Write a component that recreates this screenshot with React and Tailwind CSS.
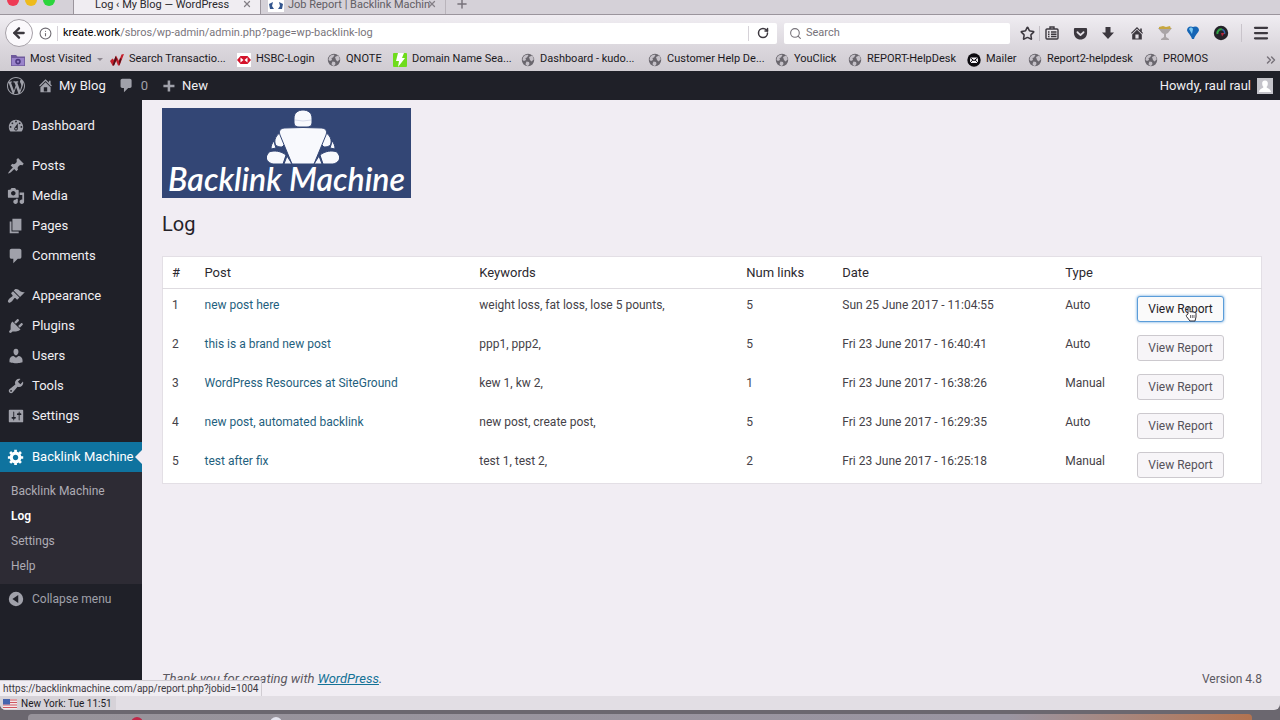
import {
  ArrowLeft,
  ChevronsRight,
  Info,
  Menu,
  Plus,
  RotateCw,
  Search,
  Star,
  X,
} from "lucide-react";
import { FaGetPocket } from "react-icons/fa";

const ICONS = {
  wordpress:
    "M20 10c0-5.51-4.49-10-10-10C4.48 0 0 4.49 0 10c0 5.52 4.48 10 10 10 5.51 0 10-4.48 10-10zM7.78 15.37L4.37 6.22c.55-.02 1.17-.08 1.17-.08.5-.06.44-1.13-.06-1.11 0 0-1.45.11-2.37.11-.18 0-.37 0-.58-.01C4.12 2.69 6.87 1.11 10 1.11c2.33 0 4.45.87 6.05 2.34-.68-.11-1.65.39-1.65 1.58 0 .74.45 1.36.9 2.1.35.61.55 1.36.55 2.46 0 1.49-1.4 5-1.4 5l-3.03-8.37c.54-.02.82-.17.82-.17.5-.05.44-1.25-.06-1.22 0 0-1.44.12-2.38.12-.87 0-2.33-.12-2.33-.12-.5-.03-.56 1.2-.06 1.22l.92.08 1.26 3.41zM17.41 10c.24-.64.74-1.87.43-4.25.7 1.29 1.05 2.71 1.05 4.25 0 3.29-1.73 6.24-4.4 7.78.97-2.59 1.94-5.2 2.92-7.78zM6.1 18.09C3.12 16.65 1.11 13.53 1.11 10c0-1.3.23-2.48.72-3.59C3.25 10.3 4.67 14.2 6.1 18.09zm4.03-6.63l2.58 6.98c-.86.29-1.76.45-2.71.45-.79 0-1.57-.11-2.29-.33.81-2.38 1.62-4.74 2.42-7.1z",
  home: "M16 8.5l1.53 1.53-1.06 1.06L10 4.6l-6.47 6.49-1.06-1.06L10 2.5l4 4v-2h2v4zm-6-2.46l6 5.99V18H4v-5.97zM12 17v-5H8v5h4z",
  plus: "M17 9v3h-5v5H9v-5H4V9h5V4h3v5h5z",
  dashboard:
    "M3.76 16h12.48c1.1-1.37 1.76-3.11 1.76-5 0-4.42-3.58-8-8-8s-8 3.58-8 8c0 1.89.66 3.63 1.76 5zM10 4c.55 0 1 .45 1 1s-.45 1-1 1-1-.45-1-1 .45-1 1-1zM6 6c.55 0 1 .45 1 1s-.45 1-1 1-1-.45-1-1 .45-1 1-1zm8 0c.55 0 1 .45 1 1s-.45 1-1 1-1-.45-1-1 .45-1 1-1zm-5.37 5.55L12 7v6c0 1.1-.9 2-2 2s-2-.9-2-2c0-.57.24-1.08.63-1.45zM4 10c.55 0 1 .45 1 1s-.45 1-1 1-1-.45-1-1 .45-1 1-1zm12 0c.55 0 1 .45 1 1s-.45 1-1 1-1-.45-1-1 .45-1 1-1zm-5 3c0-.55-.45-1-1-1s-1 .45-1 1 .45 1 1 1 1-.45 1-1z",
  post: "M10.44 3.02l1.82-1.82 6.36 6.35-1.83 1.82c-1.05-.68-2.48-.57-3.41.36l-.75.75c-.92.93-1.04 2.35-.35 3.41l-1.83 1.82-2.41-2.41-2.8 2.79c-.42.42-3.38 2.71-3.8 2.29s1.86-3.39 2.28-3.81l2.79-2.79L4.1 9.36l1.83-1.82c1.05.69 2.48.57 3.4-.36l.75-.75c.93-.92 1.05-2.35.36-3.41z",
  media:
    "M13 11V4c0-.55-.45-1-1-1h-1.67L9 1H5L3.67 3H2c-.55 0-1 .45-1 1v7c0 .55.45 1 1 1h10c.55 0 1-.45 1-1zM7 4.5c1.38 0 2.5 1.12 2.5 2.5S8.38 9.5 7 9.5 4.5 8.38 4.5 7 5.62 4.5 7 4.5zM14 6h5v10.5c0 1.38-1.12 2.5-2.5 2.5S14 17.88 14 16.5s1.12-2.5 2.5-2.5c.17 0 .34.02.5.05V9h-3V6zm-4 8.05V13h2v3.5c0 1.38-1.12 2.5-2.5 2.5S7 17.88 7 16.5 8.12 14 9.5 14c.17 0 .34.02.5.05z",
  page: "M6 15V2h10v13H6zm-1 1h8v2H3V5h2v11z",
  comments:
    "M5 2h9c1.1 0 2 .9 2 2v7c0 1.1-.9 2-2 2h-2l-5 5v-5H5c-1.1 0-2-.9-2-2V4c0-1.1.9-2 2-2z",
  appearance:
    "M14.48 11.06L7.41 3.99l1.5-1.5c.5-.56 2.3-.47 3.51.32 1.21.8 1.43 1.28 2.91 2.1 1.18.64 2.45 1.26 4.45.85zm-.71.71L6.7 4.7 4.93 6.47c-.39.39-.39 1.02 0 1.41l1.06 1.06c.39.39.39 1.03 0 1.42-.6.6-1.43 1.11-2.21 1.69-.35.26-.7.53-1.01.84C1.43 14.23.4 16.08 1.4 17.07c.99 1 2.84-.03 4.18-1.36.31-.31.58-.66.85-1.02.57-.78 1.08-1.61 1.69-2.21.39-.39 1.02-.39 1.41 0l1.06 1.06c.39.39 1.02.39 1.41 0z",
  plugins:
    "M13.11 4.36L9.87 7.6 8 5.73l3.24-3.24c.35-.34 1.05-.2 1.56.32.52.51.66 1.21.31 1.55zm-8 1.77l.91-1.12 9.01 9.01-1.19.84c-.71.71-2.63 1.16-3.82 1.16H6.14L4.9 17.26c-.59.59-1.54.59-2.12 0-.59-.58-.59-1.53 0-2.12l1.24-1.24v-3.88c0-1.13.4-3.19 1.09-3.89zm7.26 3.97l3.24-3.24c.34-.35 1.04-.21 1.55.31.52.51.66 1.21.31 1.55l-3.24 3.25z",
  users:
    "M10 9.25c-2.27 0-2.73-3.44-2.73-3.44C7 4.02 7.82 2 9.97 2c2.16 0 2.98 2.02 2.71 3.81 0 0-.41 3.44-2.68 3.44zm0 2.57L12.72 10c2.39 0 4.52 2.33 4.52 4.53v2.49s-3.65 1.13-7.24 1.13c-3.65 0-7.24-1.13-7.24-1.13v-2.49c0-2.25 1.94-4.48 4.47-4.48z",
  tools:
    "M16.68 9.77c-1.34 1.34-3.3 1.67-4.95.99l-5.41 6.52c-.99.99-2.59.99-3.58 0s-.99-2.59 0-3.57l6.52-5.42c-.68-1.65-.35-3.61.99-4.95 1.28-1.28 3.12-1.62 4.72-1.06l-2.89 2.89 2.82 2.82 2.86-2.87c.53 1.58.18 3.39-1.08 4.65zM3.81 16.21c.4.39 1.04.39 1.43 0 .4-.4.4-1.04 0-1.43-.39-.4-1.03-.4-1.43 0-.39.39-.39 1.03 0 1.43z",
  settings:
    "M18 16V4c0-.55-.45-1-1-1H3c-.55 0-1 .45-1 1v12c0 .55.45 1 1 1h14c.55 0 1-.45 1-1zM8 11h1c.55 0 1 .45 1 1s-.45 1-1 1H8v1.5c0 .28-.22.5-.5.5s-.5-.22-.5-.5V13H6c-.55 0-1-.45-1-1s.45-1 1-1h1V5.5c0-.28.22-.5.5-.5s.5.22.5.5V11zm5-2h-1c-.55 0-1-.45-1-1s.45-1 1-1h1V5.5c0-.28.22-.5.5-.5s.5.22.5.5V7h1c.55 0 1 .45 1 1s-.45 1-1 1h-1v5.5c0 .28-.22.5-.5.5s-.5-.22-.5-.5V9z",
  generic:
    "M18 12h-2.18c-.17.7-.44 1.35-.81 1.93l1.54 1.54-2.1 2.1-1.54-1.54c-.58.36-1.23.63-1.91.79V19H8v-2.18c-.68-.16-1.33-.43-1.91-.79l-1.54 1.54-2.12-2.12 1.54-1.54c-.36-.58-.63-1.23-.79-1.91H1V9.03h2.17c.16-.7.44-1.35.8-1.94L2.43 5.55l2.1-2.1 1.54 1.54c.58-.37 1.24-.64 1.93-.81V2h3v2.18c.68.16 1.33.43 1.91.79l1.54-1.54 2.12 2.12-1.54 1.54c.36.59.64 1.24.8 1.94H18V12zm-8.5 1.5c1.66 0 3-1.34 3-3s-1.34-3-3-3-3 1.34-3 3 1.34 3 3 3z",
  collapse:
    "M10 2a8 8 0 1 0 0 16 8 8 0 0 0 0-16zm2.5 12.5L6 10l6.5-4.5z",
};

function Dashicon({ name, className = "size-[18px]" }) {
  return (
    <svg viewBox="0 0 20 20" fill="currentColor" fillRule="evenodd" className={`shrink-0 ${className}`} aria-hidden="true">
      <path d={ICONS[name]} />
    </svg>
  );
}

const menu = [
  [{ icon: "dashboard", label: "Dashboard" }],
  [
    { icon: "post", label: "Posts" },
    { icon: "media", label: "Media" },
    { icon: "page", label: "Pages" },
    { icon: "comments", label: "Comments" },
  ],
  [
    { icon: "appearance", label: "Appearance" },
    { icon: "plugins", label: "Plugins" },
    { icon: "users", label: "Users" },
    { icon: "tools", label: "Tools" },
    { icon: "settings", label: "Settings" },
  ],
];

const submenu = ["Backlink Machine", "Log", "Settings", "Help"];

const rows = [
  { id: 1, post: "new post here", keywords: "weight loss, fat loss, lose 5 pounts,", links: 5, date: "Sun 25 June 2017 - 11:04:55", type: "Auto" },
  { id: 2, post: "this is a brand new post", keywords: "ppp1, ppp2,", links: 5, date: "Fri 23 June 2017 - 16:40:41", type: "Auto" },
  { id: 3, post: "WordPress Resources at SiteGround", keywords: "kew 1, kw 2,", links: 1, date: "Fri 23 June 2017 - 16:38:26", type: "Manual" },
  { id: 4, post: "new post, automated backlink", keywords: "new post, create post,", links: 5, date: "Fri 23 June 2017 - 16:29:35", type: "Auto" },
  { id: 5, post: "test after fix", keywords: "test 1, test 2,", links: 2, date: "Fri 23 June 2017 - 16:25:18", type: "Manual" },
];

const bookmarks = [
  { icon: "folder", label: "Most Visited", width: "w-[99px]" },
  { icon: "red", label: "Search Transactio...", width: "w-[127px]" },
  { icon: "hsbc", label: "HSBC-Login", width: "w-[90px]" },
  { icon: "globe", label: "QNOTE", width: "w-[66px]" },
  { icon: "bolt", label: "Domain Name Sea...", width: "w-[128px]" },
  { icon: "globe", label: "Dashboard - kudo...", width: "w-[127px]" },
  { icon: "globe", label: "Customer Help De...", width: "w-[127px]" },
  { icon: "globe", label: "YouClick", width: "w-[73px]" },
  { icon: "globe", label: "REPORT-HelpDesk", width: "w-[119px]" },
  { icon: "mail", label: "Mailer", width: "w-[61px]" },
  { icon: "globe", label: "Report2-helpdesk", width: "w-[116px]" },
  { icon: "globe", label: "PROMOS", width: "w-[80px]" },
];

function BookmarkIcon({ name }) {
  const cls = "size-[14px] shrink-0";
  if (name === "folder") {
    return (
      <svg viewBox="0 0 14 14" className={cls}>
        <path d="M0 2h5l1.5 1.5H14V13H0z" fill="#6f5a9c" />
        <path d="M.8 5h12.4v7.3H.8z" fill="#9a84cb" />
        <circle cx="7" cy="8.6" r="2" fill="none" stroke="#4d3a80" strokeWidth="1.6" />
      </svg>
    );
  }
  if (name === "red") {
    return (
      <svg viewBox="0 0 14 14" className={cls}>
        <path d="M0 8l2.5-2.5L4 7l2-4.5L9 8l2.5-6.5L14 1 9.5 12.500H8L6 7.500l-2 5H2.500z" fill="#c4202c" />
        <path d="M2.500 12.500L5.500 3 7 6l-3 6.500zM9 8l1-3 1.500 1-2 6.500z" fill="#541018" />
      </svg>
    );
  }
  if (name === "hsbc") {
    return (
      <svg viewBox="0 0 14 14" className={cls}>
        <path d="M0 0h14v14H0z" fill="#fff" />
        <path d="M0 7l3.5-4h7L14 7l-3.5 4h-7z" fill="#d4122a" />
        <path d="M3.5 4.5L6.5 7l-3 2.5zM10.5 4.5L7.5 7l3 2.5z" fill="#fff" />
      </svg>
    );
  }
  if (name === "bolt") {
    return (
      <svg viewBox="0 0 14 14" className={cls}>
        <rect width="14" height="14" rx="1" fill="#6fdc1c" />
        <path d="M5 0h6L9 5h3L5 14l1-6H3z" fill="#fff" />
      </svg>
    );
  }
  if (name === "mail") {
    return (
      <svg viewBox="0 0 14 14" className={cls}>
        <circle cx="7" cy="7" r="6.7" fill="#0d0b10" />
        <path d="M3 4.5h8V10H3z" fill="#f3f0f4" />
        <path d="M3 4.5l4 3.2 4-3.2M3 10l2.8-3M11 10L8.2 7" fill="none" stroke="#0d0b10" />
      </svg>
    );
  }
  return (
    <svg viewBox="0 0 14 14" className={cls}>
      <circle cx="7" cy="7" r="6.2" fill="#69666d" />
      <path d="M2 4.5C3.5 2 6 1.500 7.500 2L6 4.500 4.500 5 5 7 3 8 1.500 7zM8 4l3-1.500c1 1 1.700 2.300 1.700 4L10.500 8.500 9 7zM5.500 8.500L8 9l.5 2L7 13c-1.500-.2-2-1-2.500-2z" fill="#c5c1c8" />
    </svg>
  );
}

function BrowserTabs() {
  return (
    <div className="flex h-[15px] shrink-0 items-end overflow-hidden border-b border-[#9b959d] bg-[#d5d1d8]">
      <div className="flex h-[20px] w-[73px] shrink-0 items-start gap-[6px] pl-[7px]">
        <button aria-label="Close window" className="size-3 rounded-full bg-[#ee3b55]" />
        <button aria-label="Minimize window" className="size-3 rounded-full bg-[#eebb1c]" />
        <button aria-label="Zoom window" className="size-3 rounded-full bg-[#2bd53c]" />
      </div>
      <div className="flex h-[20px] w-[188px] shrink-0 items-center justify-between border-x border-[#9b959d] bg-[#f0edf2] pl-[21px] pr-2 text-[11px] leading-none text-[#2b282d]">
        <span className="whitespace-nowrap">Log ‹ My Blog — WordPress</span>
        <button aria-label="Close tab">
          <X size={10} strokeWidth={3} className="text-[#858087]" />
        </button>
      </div>
      <div className="flex h-[20px] w-[185px] shrink-0 items-center gap-1 border-r border-[#b9b4bb] pl-[7px] pr-2 text-[11px] leading-none text-[#615d64]">
        <svg viewBox="0 0 16 16" className="size-4 shrink-0">
          <path d="M0 0h16v16H0z" fill="#fff" />
          <path d="M1 8l4-2-1 4 2 3H2zM15 8l-4-2 1 4-2 3h4z" fill="#34568f" />
        </svg>
        <span className="min-w-0 flex-1 whitespace-nowrap">Job Report | Backlink Machin</span>
        <button aria-label="Close tab">
          <X size={10} strokeWidth={3} className="text-[#858087]" />
        </button>
      </div>
      <button aria-label="New tab" className="flex h-[20px] w-8 items-center justify-center text-[#77727a]">
        <Plus size={14} strokeWidth={2.5} />
      </button>
    </div>
  );
}

function NavBar() {
  return (
    <div className="flex h-[34px] shrink-0 items-center bg-linear-to-b from-[#f0edf2] to-[#dad6dc] pl-[5px] pr-[10px] pt-[2px] text-[#3c383f]">
      <button aria-label="Back" className="z-10 flex size-7 shrink-0 items-center justify-center rounded-full border border-[#a6a1a8] bg-[#fbf9fc]">
        <ArrowLeft size={16} strokeWidth={3.5} />
      </button>
      <div className="-ml-2 flex h-[21px] flex-1 items-center rounded-r-xs bg-white pl-[14px] text-[11px]">
        <Info size={13} className="text-[#6f6b72]" />
        <span className="mx-[5px] h-[15px] w-px bg-[#d6d2d8]" />
        <span className="text-black">kreate.work</span>
        <span className="text-[#79757c]">/sbros/wp-admin/admin.php?page=wp-backlink-log</span>
        <button aria-label="Reload" className="ml-auto flex h-[15px] w-[29px] items-center justify-center border-l border-[#d6d2d8]">
          <RotateCw size={12} strokeWidth={3} />
        </button>
      </div>
      <label className="ml-[7px] flex h-[21px] w-[226px] items-center gap-1 rounded-xs bg-white pl-[5px]">
        <Search size={13} className="text-[#77737a]" />
        <input type="text" placeholder="Search" aria-label="Search" className="min-w-0 flex-1 bg-transparent text-[11px] outline-none placeholder:text-[#77737a]" />
      </label>
      <div className="ml-[10px] flex items-center">
        <button aria-label="Bookmark" className="w-5 border-r border-[#c3bec5]">
          <Star size={15} strokeWidth={2.5} />
        </button>
        <button aria-label="Bookmarks list" className="ml-[5px] w-[28px]">
          <svg viewBox="0 0 14 14" className="size-[14px]" fill="none" stroke="currentColor" strokeWidth="1.4">
            <rect x="1" y="3" width="12" height="10" rx="1" />
            <path d="M5 3V1h4v2M3 6h1.5M6 6h5.5M3 8.2h1.500M6 8.200h5.500M3 10.500h1.500M6 10.500h5.500" />
          </svg>
        </button>
        <button aria-label="Pocket" className="w-[28px]">
          <FaGetPocket size={15} />
        </button>
        <button aria-label="Downloads" className="w-[28px]">
          <svg viewBox="0 0 14 14" className="size-[14px]" fill="currentColor">
            <path d="M4.5 1h5v5.5H13L7 13 1 6.5h3.5z" />
          </svg>
        </button>
        <button aria-label="Home" className="w-[28px]">
          <Dashicon name="home" className="size-4" />
        </button>
        <button aria-label="Cup" className="w-[28px]">
          <svg viewBox="0 0 16 16" className="size-4">
            <path d="M1 3h14l-4 5-2 1v3l3 2v1H4v-1l3-2V9L5 8z" fill="#aaa5a7" />
            <path d="M2 2l4-1 3 1 4-1 1 3H2z" fill="#c7a63f" />
          </svg>
        </button>
        <button aria-label="Balloon" className="w-[28px]">
          <svg viewBox="0 0 16 16" className="size-4">
            <path d="M2 5a4 4 0 0 1 6-3 4 4 0 0 1 6 3c0 2-4 5-5 9H7C6 10 2 7 2 5z" fill="#1565b5" />
            <path d="M4 4c1-2 3-2 4 0l-1 5z" fill="#7cc7f1" />
          </svg>
        </button>
        <button aria-label="Camera" className="w-[28px]">
          <svg viewBox="0 0 16 16" className="size-4">
            <circle cx="8" cy="8" r="7.2" fill="#252229" />
            <path d="M4.5 9A3.7 3.7 0 0 1 9 4.5" fill="none" stroke="#2fa344" strokeWidth="2" />
            <path d="M9 4.5A3.6 3.6 0 0 1 11.5 9" fill="none" stroke="#3566a8" strokeWidth="1.5" />
            <path d="M8 8h3.5L9 11.5z" fill="#b5263b" />
          </svg>
        </button>
        <button aria-label="Open menu" className="border-l border-[#c9c4cb] pl-[10px]">
          <Menu size={18} strokeWidth={3} />
        </button>
      </div>
    </div>
  );
}

function BookmarksBar() {
  return (
    <div className="flex h-[22px] shrink-0 items-center bg-linear-to-b from-[#dad6dc] to-[#d0ccd2] pb-px pl-[11px] pr-[2px] text-[11px] text-[#1b191d]">
      {bookmarks.map((b) => (
        <a key={b.label} href="#" className={`flex shrink-0 items-center gap-[5px] whitespace-nowrap ${b.width}`}>
          <BookmarkIcon name={b.icon} />
          {b.label}
          {b.icon === "folder" && <span className="border-x-[3px] border-t-[3px] border-x-transparent border-t-[#8d8790]" />}
        </a>
      ))}
      <button aria-label="More bookmarks" className="ml-auto">
        <ChevronsRight size={14} strokeWidth={2.5} className="text-[#77727a]" />
      </button>
    </div>
  );
}

function AdminBar() {
  return (
    <div className="flex h-[29px] shrink-0 items-center bg-[#1f2028] px-[7px] text-[13px] text-[#f1eff3]">
      <a href="#" aria-label="About WordPress" className="mr-[12px] text-[#a0a1aa]">
        <Dashicon name="wordpress" />
      </a>
      <a href="#" className="mr-[12px] flex items-center gap-[5px]">
        <Dashicon name="home" className="size-[17px] text-[#a0a1aa]" />
        My Blog
      </a>
      <a href="#" className="mr-[12px] flex items-center gap-[6px] text-[#a0a1aa]">
        <Dashicon name="comments" className="size-[17px]" />
        0
      </a>
      <a href="#" className="flex items-center gap-[5px]">
        <Dashicon name="plus" className="size-[17px] text-[#a0a1aa]" />
        New
      </a>
      <a href="#" className="ml-auto flex items-center gap-[6px]">
        Howdy, raul raul
        <svg viewBox="0 0 16 16" className="size-4">
          <path d="M0 0h16v16H0z" fill="#c4c3ca" />
          <path d="M8 2.5c2.2 0 3 1.5 2.8 3.5-.1 1.5-.7 2.5-1.3 3 .5 1.5 4 1.5 4.5 5H2c.5-3.5 4-3.5 4.5-5-.6-.5-1.2-1.5-1.3-3C5 4 5.8 2.5 8 2.500z" fill="#fff" />
        </svg>
      </a>
    </div>
  );
}

function Sidebar() {
  return (
    <nav className="w-[142px] shrink-0 bg-[#1f2028] pt-px text-[13px] text-[#f1eff3]">
      {menu.map((group, i) => (
        <ul key={i} className="mt-[10px]">
          {group.map((item) => (
            <li key={item.label}>
              <a href="#" className="flex h-[30px] items-center gap-[7px] pl-[7px]">
                <Dashicon name={item.icon} className="size-[18px] text-[#a0a1aa]" />
                {item.label}
              </a>
            </li>
          ))}
        </ul>
      ))}
      <a href="#" className="relative mt-[11px] flex h-[30px] items-center gap-[7px] whitespace-nowrap bg-[#0f739f] pl-[7px] text-white">
        <Dashicon name="generic" />
        Backlink Machine
        <span className="absolute right-0 border-y-[7px] border-r-[7px] border-y-transparent border-r-[#f1edf3]" />
      </a>
      <ul className="bg-[#2d2b34] py-[6px] text-[12px] text-[#aeacb4]">
        {submenu.map((label) => (
          <li key={label}>
            <a href="#" className={`flex h-[25px] items-center pl-[11px] ${label === "Log" ? "font-semibold text-white" : ""}`}>
              {label}
            </a>
          </li>
        ))}
      </ul>
      <button className="flex h-[30px] items-center gap-[7px] pl-[7px] text-[12px] text-[#a0a1aa]">
        <Dashicon name="collapse" />
        Collapse menu
      </button>
    </nav>
  );
}

function RobotArm() {
  return (
    <>
      <path d="M15 22c-4 1-8 6-7 11 0 3 4 4 7 4l4-4z" />
      <path d="M7 31c-2 2-3 5-3 8l5-1-1-3z" />
      <path d="M2 42c5-2 12-1 17 3l-3 9H6c-5-1-8-5-6-9z" />
      <path d="M20 46l5 8h-8z" />
    </>
  );
}

function Logo() {
  return (
    <div className="relative flex h-[90px] w-[249px] items-end justify-center bg-[#334675]">
      <svg viewBox="0 0 72 56" className="absolute left-[105px] top-[2px] h-[56px] w-[72px]" fill="#f8f9fd" stroke="#334675">
        <RobotArm />
        <g transform="translate(72 0) scale(-1 1)">
          <RobotArm />
        </g>
        <path d="M27 8c0-5 4-8 9-8s9 3 9 8v5c0 3-3 4-5 4h-8c-2 0-5-1-5-4z" />
        <path d="M28 10q8 2 16 0" fill="none" stroke="#c5cce0" strokeWidth=".7" />
        <path d="M17 18q19-1 38 0c5 1 5 4 4 7L47 54H25L13 25c-1-3-1-6 4-7z" />
      </svg>
      <span className="relative whitespace-nowrap font-['Lato'] text-[32px] font-semibold italic leading-[38px] text-white">Backlink Machine</span>
    </div>
  );
}

function HandCursor() {
  return (
    <svg viewBox="0 0 12 16" className="pointer-events-none absolute left-[48px] top-[10px] h-4 w-3" fill="#fff" stroke="#36333a" strokeWidth="1" strokeLinejoin="round">
      <path d="M3 8V2q0-1 1-1t1 1v4q1-1 2 0 1-.7 2 .3 1.5-.5 2 .7v4l-1 4H5L1.5 10.5q-.8-1.5.5-1.7z" />
      <path d="M5.5 9v3M7.3 9v3M9 9v3" strokeWidth=".7" />
    </svg>
  );
}

function LogTable() {
  return (
    <table className="w-full table-fixed border border-[#e3dfe5] bg-white text-left text-[12px] leading-[18px] text-[#454248]">
      <colgroup>
        <col className="w-[33px]" />
        <col className="w-[25%]" />
        <col className="w-[267px]" />
        <col className="w-[96px]" />
        <col className="w-[223px]" />
        <col className="w-[72px]" />
        <col />
      </colgroup>
      <thead>
        <tr className="h-8 border-b border-[#dedbe0] text-[13px] text-[#2c292f]">
          {["#", "Post", "Keywords", "Num links", "Date", "Type"].map((h) => (
            <th key={h} className="px-[9px] font-normal">{h}</th>
          ))}
          <td />
        </tr>
      </thead>
      <tbody>
        {rows.map((row) => (
          <tr key={row.id} className="h-[39px] align-top">
            <td className="px-[9px] pt-[7px]">{row.id}</td>
            <td className="px-[9px] pt-[7px]">
              <a href="#" className="text-[#1f5f7e]">{row.post}</a>
            </td>
            <td className="px-[9px] pt-[7px]">{row.keywords}</td>
            <td className="px-[9px] pt-[7px]">{row.links}</td>
            <td className="px-[9px] pt-[7px]">{row.date}</td>
            <td className="px-[9px] pt-[7px]">{row.type}</td>
            <td className="px-[9px] pt-[7px]">
              <div className="relative w-fit">
                <button
                  className={`block h-[26px] whitespace-nowrap rounded-[3px] border px-[10px] text-[12px] ${
                    row.id === 1
                      ? "border-[#5b9dd9] bg-[#fafafa] text-[#232126] shadow-[0_0_3px_#5b9dd9]"
                      : "border-[#ccc9ce] bg-[#f7f5f8] text-[#55525a]"
                  }`}
                >
                  View Report
                </button>
                {row.id === 1 && <HandCursor />}
              </div>
            </td>
          </tr>
        ))}
      </tbody>
    </table>
  );
}

export default function App() {
  return (
    <div className="flex h-screen flex-col overflow-hidden bg-[#6b676f] font-['Roboto','Liberation_Sans',sans-serif]">
      <BrowserTabs />
      <NavBar />
      <BookmarksBar />
      <AdminBar />
      <div className="relative flex min-h-0 flex-1 bg-[#f1edf3]">
        <Sidebar />
        <main className="flex min-w-0 flex-1 flex-col pl-5 pr-[18px] pt-2">
          <Logo />
          <h1 className="mb-[18px] mt-[12px] text-[20px] leading-[28px] text-[#252228]">Log</h1>
          <LogTable />
          <footer className="mb-[7px] mt-auto flex items-center justify-between text-[12px] leading-[20px] text-[#5b585f]">
            <p className="text-[13px] italic">
              Thank you for creating with <a href="#" className="text-[#147296] underline">WordPress</a>.
            </p>
            <p>Version 4.8</p>
          </footer>
        </main>
        <div className="absolute bottom-0 left-0 rounded-tr-xs border-r border-t border-[#d0ccd2] bg-[#f0edf2] px-[3px] text-[10px] leading-[15px] text-[#3c393f]">
          https://backlinkmachine.com/app/report.php?jobid=1004
        </div>
      </div>
      <div className="flex h-[14px] shrink-0 items-center rounded-b-md bg-[#e2dee4]">
        <div className="flex h-full items-center gap-1 rounded-bl-md bg-[#d6d2d8] pl-[3px] pr-1 pt-px text-[10px] leading-[13px] text-[#1c1a1f]">
          <svg viewBox="0 0 14 10" className="h-[10px] w-[14px]">
            <path d="M0 0h14v10H0z" fill="#f3e9ea" />
            <path d="M0 1h14M0 3.5h14M0 6h14M0 8.5h14" stroke="#cf5560" strokeWidth="1.2" />
            <path d="M0 0h7v5.5H0z" fill="#4664ae" />
          </svg>
          New York: Tue 11:51
        </div>
      </div>
      <div className="mx-7 mt-1 flex h-[6px] shrink-0 items-start gap-[127px] overflow-hidden rounded-t-sm bg-linear-to-r from-[#97939a] via-[#9a95a2] via-80% to-[#b37350] pl-[103px] pt-[3px]">
        <span className="size-3 shrink-0 rounded-full bg-[#c02848]" />
        <span className="size-3 shrink-0 rounded-full bg-[#e4e4ee]" />
      </div>
    </div>
  );
}
